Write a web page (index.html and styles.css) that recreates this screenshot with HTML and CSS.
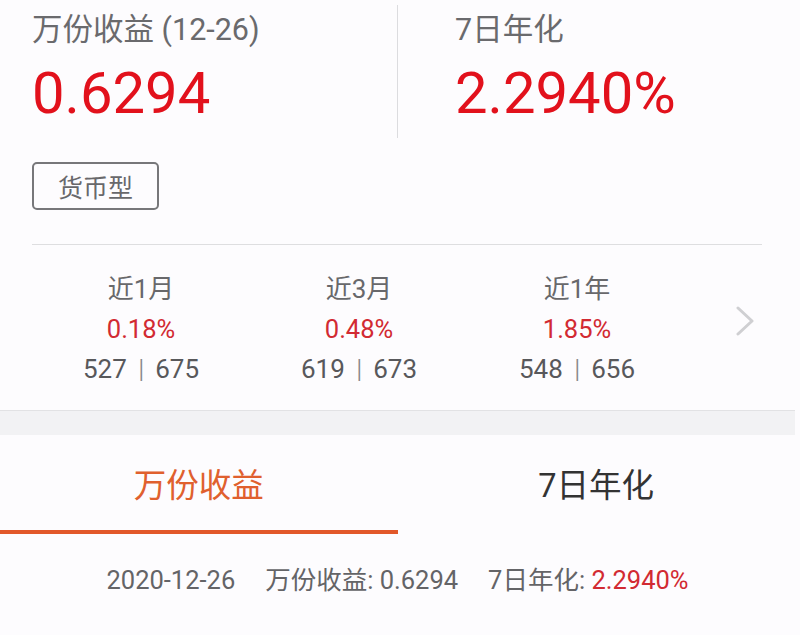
FILE: index.html
```
<!DOCTYPE html>
<html lang="zh-CN">
<head>
<meta charset="utf-8">
<title>货币基金</title>
<link rel="stylesheet" href="styles.css">
</head>
<body>
<div class="page">
  <section class="summary">
    <div class="col col-left">
      <div class="label">万份收益 (12-26)</div>
      <div class="value">0.6294</div>
    </div>
    <div class="col col-right">
      <div class="label">7日年化</div>
      <div class="value">2.2940%</div>
    </div>
  </section>
  <div class="tag-wrap"><span class="tag">货币型</span></div>
  <div class="rule"></div>
  <section class="stats">
    <div class="stat">
      <div class="stat-label">近1月</div>
      <div class="stat-pct">0.18%</div>
      <div class="stat-rank">527<span class="sep">|</span>675</div>
    </div>
    <div class="stat">
      <div class="stat-label">近3月</div>
      <div class="stat-pct">0.48%</div>
      <div class="stat-rank">619<span class="sep">|</span>673</div>
    </div>
    <div class="stat">
      <div class="stat-label">近1年</div>
      <div class="stat-pct">1.85%</div>
      <div class="stat-rank">548<span class="sep">|</span>656</div>
    </div>
    <svg class="chevron" width="20" height="30" viewBox="0 0 20 30"><path d="M3 2 L17 15 L3 28" fill="none" stroke="#cfcfd2" stroke-width="3" stroke-linecap="round" stroke-linejoin="round"/></svg>
  </section>
  <div class="band"></div>
  <nav class="tabs">
    <div class="tab active">万份收益</div>
    <div class="tab">7日年化</div>
  </nav>
  <div class="detail">2020-12-26<span class="gap"></span>万份收益: 0.6294<span class="gap"></span>7日年化: <span class="red">2.2940%</span></div>
</div>
</body>
</html>
```
FILE: styles.css
```
html, body {
  margin: 0;
  padding: 0;
  background: #fdfcfe;
}
body {
  font-family: Roboto, "Noto Sans CJK SC", sans-serif;
  color: #666;
}
.page {
  width: 795px;
}
.summary {
  display: flex;
  padding-top: 5px;
}
.col {
  padding-top: 5px;
  padding-bottom: 13px;
}
.col-left {
  width: 365px;
  padding-left: 32px;
}
.col-right {
  border-left: 1px solid #dcdcdf;
  padding-left: 57px;
}
.label {
  font-size: 30.5px;
  line-height: 40px;
  color: #6a6a6d;
}
.value {
  font-size: 58px;
  line-height: 64px;
  margin-top: 11px;
  color: #e2111c;
}
.tag-wrap {
  padding-left: 32px;
  margin-top: 24px;
}
.tag {
  display: inline-flex;
  align-items: center;
  box-sizing: border-box;
  height: 48px;
  padding: 0 24px;
  border: 2px solid #77777a;
  border-radius: 5px;
  font-size: 25px;
  color: #68686b;
}
.rule {
  margin: 34px 33px 0 32px;
  height: 1px;
  background: #dedee0;
}
.stats {
  display: flex;
  align-items: center;
  padding: 24px 0 21px 32px;
}
.stat {
  width: 218px;
  text-align: center;
  font-size: 25px;
  line-height: 40px;
}
.stat-label {
  color: #68686b;
  font-size: 26px;
}
.stat-pct {
  color: #d22a32;
  font-size: 25.5px;
}
.stat-rank {
  color: #58585b;
  font-size: 26px;
}
.sep {
  display: inline-block;
  margin: 0 11px;
  color: #8a8a8d;
  transform: scaleX(0.8);
}
.chevron {
  margin-left: 49px;
  margin-top: -16px;
}
.band {
  height: 24px;
  background: #f2f2f4;
  border-top: 1px solid #e2e2e4;
}
.tabs {
  display: flex;
}
.tab {
  flex: 1;
  height: 95px;
  display: flex;
  align-items: center;
  justify-content: center;
  font-size: 32.5px;
  color: #333;
  border-bottom: 4px solid transparent;
}
.tab.active {
  color: #e0602e;
  border-bottom-color: #e2582a;
}
.detail {
  margin-top: 26px;
  text-align: center;
  font-size: 25.5px;
  line-height: 40px;
  color: #646467;
}
.gap {
  display: inline-block;
  width: 30px;
}
.red {
  color: #d22a32;
}
```
